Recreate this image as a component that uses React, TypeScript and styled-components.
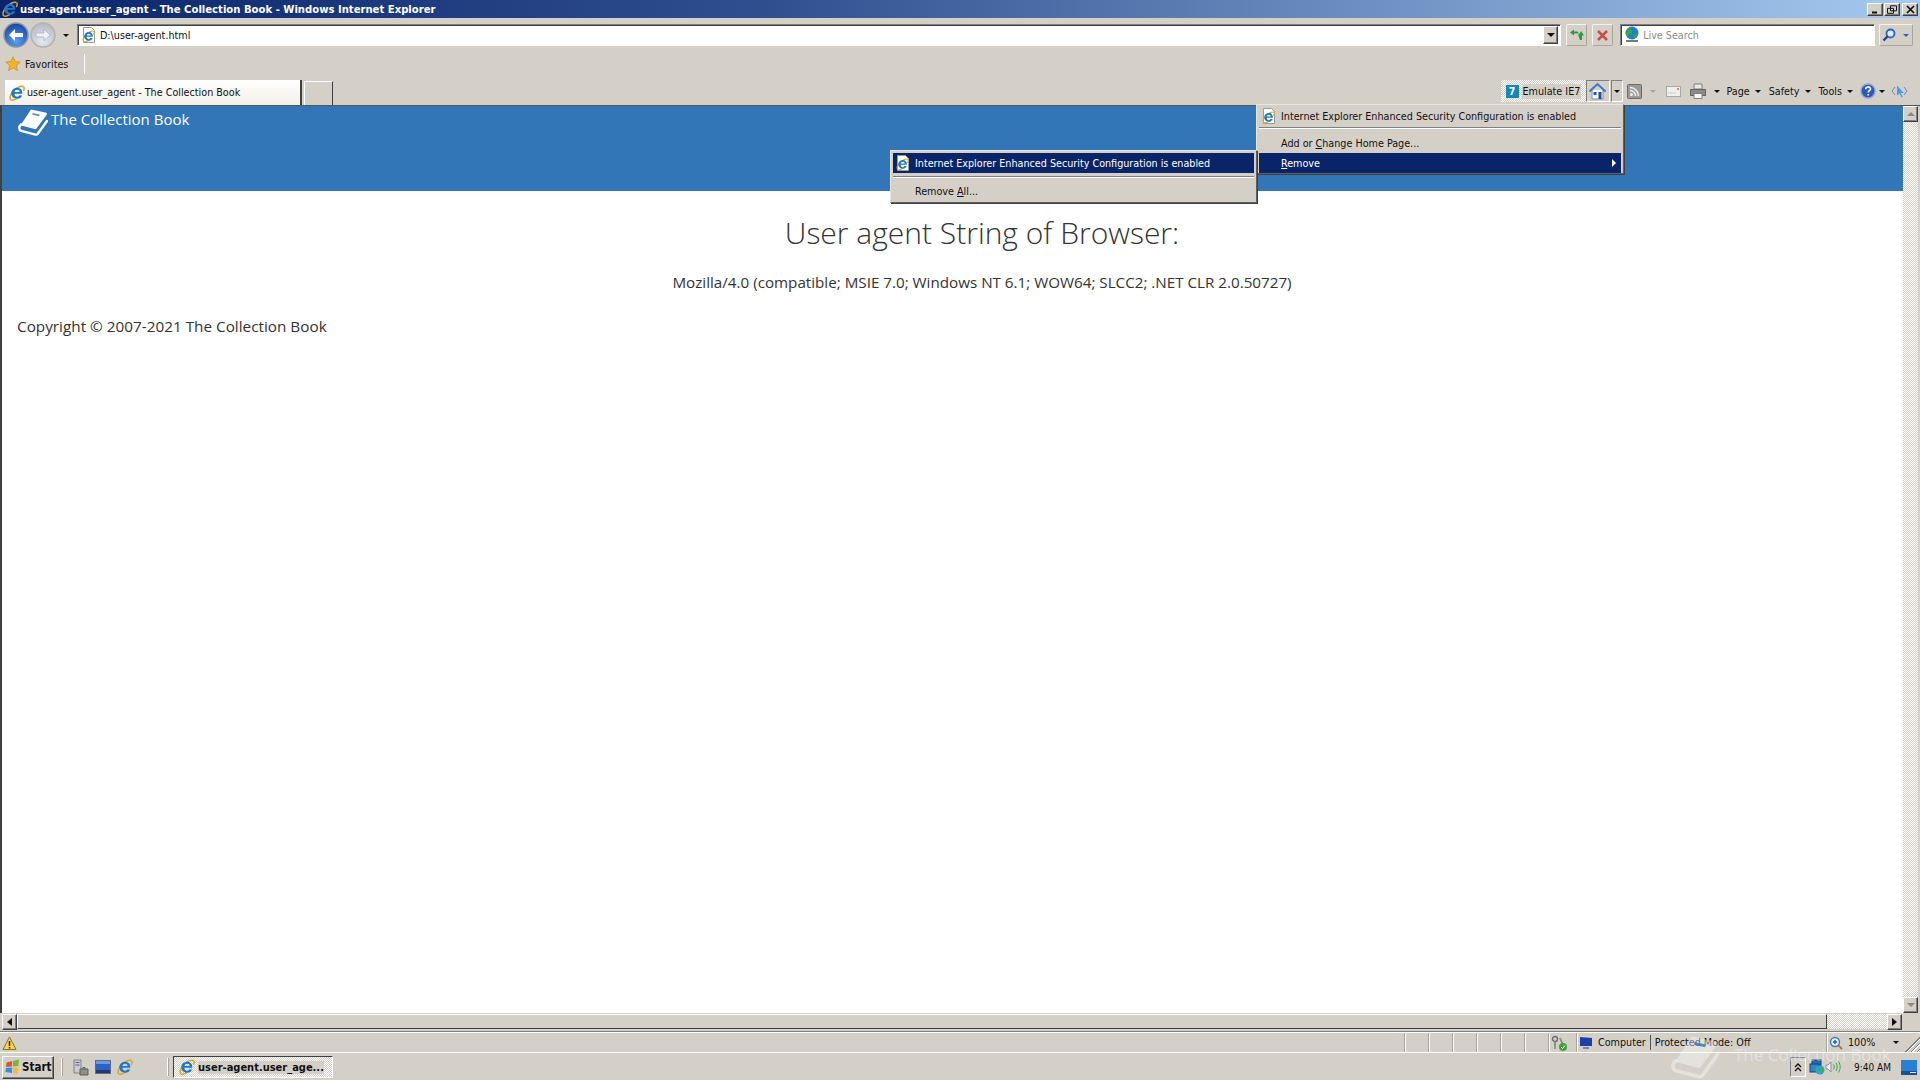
import React from 'react'
import styled, { createGlobalStyle, css } from 'styled-components'

const GlobalStyle = createGlobalStyle`
	html, body {
		margin: 0;
		height: 100%;
		overflow: hidden;
		background: #d4d0c8;
	}
	* {
		box-sizing: border-box;
	}
`

const chrome = '#d4d0c8'
const raised = css`
	border: 1px solid;
	border-color: #fff #404040 #404040 #fff;
	box-shadow: inset -1px -1px 0 #808080;
`
const softButton = css`
	border: 1px solid;
	border-color: #f4f3ef #a8a59c #a8a59c #f4f3ef;
	border-radius: 2px;
`

const Desktop = styled.div`
	position: relative;
	width: 1920px;
	height: 1080px;
	overflow: hidden;
	display: flex;
	flex-direction: column;
	background: ${chrome};
	color: #111;
	font-family: 'DejaVu Sans Condensed', 'DejaVu Sans', sans-serif;
	font-stretch: condensed;
	font-size: 10.7px;
	white-space: nowrap;
`
const TitleBar = styled.div`
	height: 18px;
	flex: none;
	display: flex;
	align-items: center;
	padding: 0 2px 0 2px;
	gap: 2px;
	background: linear-gradient(90deg, #0a246a 0%, #2f4f8f 40%, #a6caf0 100%);
`
const TitleText = styled.span`
	flex: 1;
	color: #fff;
	font-weight: 700;
	font-size: 11.2px;
`
const WinButtons = styled.div`
	display: flex;
	align-items: center;
	gap: 1px;
`
const WinButton = styled.div<{ $gap?: number }>`
	width: 16px;
	height: 13px;
	display: flex;
	align-items: center;
	justify-content: center;
	background: ${chrome};
	margin-left: ${p => p.$gap ?? 0}px;
	${raised}
`
const NavRow = styled.div`
	height: 34px;
	flex: none;
	display: flex;
	align-items: center;
	padding: 0 7px 0 3px;
`
const NavCircles = styled.div`
	display: flex;
	align-items: center;
	width: 74px;
	gap: 1px;
`
const Caret = styled.span<{ $color?: string; $left?: number; $size?: number }>`
	display: inline-block;
	flex: none;
	margin-left: ${p => p.$left ?? 0}px;
	border-style: solid;
	border-width: ${p => p.$size ?? 3}px ${p => p.$size ?? 3}px 0;
	border-color: ${p => p.$color ?? '#111'} transparent transparent;
`
const AddressBox = styled.div`
	width: 1485px;
	height: 22px;
	display: flex;
	align-items: center;
	gap: 3px;
	padding: 0 2px 0 3px;
	background: #fff;
	border: 1px solid;
	border-color: #808080 #fff #fff #808080;
	box-shadow: inset 1px 1px 0 #404040;
`
const AddressText = styled.span`
	flex: 1;
`
const ComboButton = styled.div`
	width: 15px;
	height: 18px;
	display: flex;
	align-items: center;
	justify-content: center;
	background: ${chrome};
	${raised}
`
const SoftButton = styled.div<{ $w: number; $left: number }>`
	width: ${p => p.$w}px;
	height: 22px;
	flex: none;
	margin-left: ${p => p.$left}px;
	display: flex;
	align-items: center;
	justify-content: center;
	gap: 4px;
	${softButton}
`
const SearchBox = styled(AddressBox)`
	width: 255px;
	margin-left: 7px;
	gap: 3px;
	color: #8b8b8b;
`
const FavRow = styled.div`
	height: 26px;
	flex: none;
	display: flex;
	align-items: center;
	padding: 0 0 2px 5px;
	gap: 4px;
`
const FavSeparator = styled.div`
	width: 1px;
	height: 20px;
	margin-left: 12px;
	background: #8f8c84;
	border-right: 1px solid #fff;
`
const TabRow = styled.div`
	height: 27px;
	flex: none;
	display: flex;
	justify-content: space-between;
	align-items: flex-end;
	padding-left: 5px;
`
const TabStrip = styled.div`
	display: flex;
	align-items: flex-end;
`
const ActiveTab = styled.div`
	width: 297px;
	height: 25px;
	display: flex;
	align-items: center;
	gap: 2px;
	padding-left: 4px;
	background: linear-gradient(#ffffff, #f1efe9);
	border-right: 2px solid #404040;
`
const NewTab = styled.div`
	width: 29px;
	height: 24px;
	margin-left: 2px;
	border: 1px solid #fff;
	border-bottom: none;
	border-right: 1px solid #404040;
`
const ToolStrip = styled.div`
	display: flex;
	align-items: center;
	height: 25px;
	padding: 0 12px 3px 0;
`
const EmulateBox = styled.div`
	width: 85px;
	height: 22px;
	display: flex;
	align-items: center;
	gap: 3px;
	padding-left: 5px;
	background: repeating-conic-gradient(#fff 0 25%, ${chrome} 0 50%) 0 0 / 2px 2px;
`
const EmulateText = styled.span`
	background: ${chrome};
	padding: 1px;
`
const SevenBadge = styled.span`
	width: 13px;
	height: 13px;
	display: flex;
	align-items: center;
	justify-content: center;
	background: #1389b4;
	color: #fff;
	font-weight: 700;
	font-size: 10.5px;
`
const PressedTool = styled.div<{ $w: number; $left?: number }>`
	width: ${p => p.$w}px;
	height: 22px;
	margin-left: ${p => p.$left ?? 0}px;
	display: flex;
	align-items: center;
	justify-content: center;
	border: 1px solid;
	border-color: #808080 #fff #fff #808080;
`
const Tool = styled.div<{ $left: number }>`
	display: flex;
	align-items: center;
	gap: 5px;
	margin-left: ${p => p.$left}px;
`
const ContentArea = styled.div`
	flex: 1;
	min-height: 0;
	display: flex;
	border-left: 2px solid #404040;
	border-top: 1px solid #555;
	background: #fff;
`
const Viewport = styled.div`
	flex: 1;
	min-width: 0;
	overflow: hidden;
	background: #fff;
`
const Page = styled.div`
	width: 1960px;
	color: #333;
	font-family: 'Open Sans', 'Noto Sans', sans-serif;
	font-stretch: normal;
`
const Banner = styled.header`
	height: 85px;
	background: #3276b8;
	padding: 2px 0 0 16px;
	display: flex;
	align-items: flex-start;
	gap: 3px;
	color: #fff;
	font-size: 15px;
`
const BannerText = styled.span`
	line-height: 22px;
`
const Heading = styled.h1`
	margin: 20px 0 0;
	height: 44px;
	text-align: center;
	font-weight: 300;
	font-size: 30px;
	line-height: 44px;
`
const AgentText = styled.p`
	margin: 16px 0 0;
	text-align: center;
	font-size: 15.2px;
	line-height: 22px;
`
const Copyright = styled.p`
	margin: 22px 0 0 15px;
	font-size: 15.3px;
	line-height: 22px;
`
const VScroll = styled.div`
	width: 17px;
	flex: none;
	display: flex;
	flex-direction: column;
	justify-content: space-between;
	background: repeating-conic-gradient(#fff 0 25%, ${chrome} 0 50%) 0 0 / 2px 2px;
	border-right: 2px solid ${chrome};
`
const ScrollButton = styled.div`
	width: 15px;
	height: 16px;
	flex: none;
	display: flex;
	align-items: center;
	justify-content: center;
	background: ${chrome};
	${raised}
`
const HScroll = styled.div`
	height: 19px;
	flex: none;
	display: flex;
	padding: 1px 0 2px 2px;
	border-bottom: 1px solid #808080;
`
const HThumb = styled.div`
	flex: 1;
	background: ${chrome};
	border-top: 1px solid #fff;
	border-left: 1px solid #fff;
	border-right: 1px solid #404040;
	border-bottom: 1px solid #404040;
`
const HTrack = styled.div`
	width: 60px;
	background: repeating-conic-gradient(#fff 0 25%, ${chrome} 0 50%) 0 0 / 2px 2px;
`
const HEnd = styled.div`
	width: 18px;
`
const StatusBar = styled.div`
	height: 21px;
	flex: none;
	display: flex;
	align-items: stretch;
	border-top: 1px solid #fff;
	border-bottom: 1px solid #fff;
`
const StatusFill = styled.div`
	flex: 1;
	display: flex;
	align-items: center;
	padding-left: 2px;
`
const StatusCell = styled.div<{ $w: number }>`
	width: ${p => p.$w}px;
	flex: none;
	display: flex;
	align-items: center;
	gap: 5px;
	padding-left: 2px;
	border-left: 1px solid #a8a59c;
	box-shadow: inset 1px 0 0 #fff;
`
const ZoneDivider = styled.span`
	width: 1px;
	height: 15px;
	background: #555;
	margin: 0 -1px;
`
const Grip = styled.div`
	flex: 1;
	height: 100%;
	background: repeating-linear-gradient(135deg, ${chrome} 0 2px, #808080 2px 3px, #fff 3px 4px);
	clip-path: polygon(100% 0, 100% 100%, 0 100%);
`
const Taskbar = styled.div`
	height: 27px;
	flex: none;
	display: flex;
	align-items: center;
	padding: 1px 3px 0 2px;
`
const StartButton = styled.div`
	width: 52px;
	height: 23px;
	display: flex;
	align-items: center;
	gap: 1px;
	padding-left: 2px;
	font-weight: 700;
	font-size: 11.5px;
	${raised}
`
const Divider = styled.div<{ $left: number }>`
	width: 2px;
	height: 18px;
	flex: none;
	margin-left: ${p => p.$left}px;
	background: #a8a59c;
	border-left: 1px solid #fff;
`
const QuickIcons = styled.div`
	display: flex;
	align-items: center;
	gap: 6px;
	margin-left: 9px;
	width: 95px;
`
const TaskItem = styled.div`
	width: 160px;
	height: 22px;
	margin-left: 4px;
	display: flex;
	align-items: center;
	gap: 3px;
	padding-left: 5px;
	font-weight: 700;
	font-size: 11px;
	border: 1px solid;
	border-color: #404040 #fff #fff #404040;
	background: repeating-conic-gradient(#fff 0 25%, ${chrome} 0 50%) 0 0 / 2px 2px;
`
const TaskLabel = styled.span`
	background: ${chrome};
`
const Tray = styled.div`
	margin-left: auto;
	display: flex;
	align-items: center;
`
const TrayToggle = styled.div`
	width: 16px;
	height: 20px;
	display: flex;
	align-items: center;
	justify-content: center;
	border: 1px solid;
	border-color: #808080 #fff #fff #808080;
	margin-right: 3px;
`
const Clock = styled.span`
	font-size: 10px;
	margin: 0 10px 0 13px;
`
const Menu = styled.div<{ $x: number; $y: number; $w: number; $h: number }>`
	position: absolute;
	left: ${p => p.$x}px;
	top: ${p => p.$y}px;
	width: ${p => p.$w}px;
	height: ${p => p.$h}px;
	padding: 2px;
	background: ${chrome};
	border: 1px solid;
	border-color: #e8e6e0 #606060 #606060 #e8e6e0;
	box-shadow: 1px 1px 0 #404040;
	z-index: 3;
`
const MenuRow = styled.div<{ $active?: boolean; $h?: number }>`
	height: ${p => p.$h ?? 20}px;
	display: flex;
	align-items: center;
	padding: 0 5px 0 2px;
	gap: 4px;
	background: ${p => (p.$active ? '#0a246a' : 'transparent')};
	color: ${p => (p.$active ? '#fff' : '#111')};
`
const MenuLabel = styled.span<{ $indent?: boolean }>`
	flex: 1;
	padding-left: ${p => (p.$indent ? 20 : 0)}px;
`
const MenuRule = styled.div<{ $top: number; $bottom: number }>`
	height: 2px;
	margin: ${p => p.$top}px 0 ${p => p.$bottom}px;
	background: #808080;
	border-bottom: 1px solid #fff;
`
const SubArrow = styled.span`
	width: 0;
	height: 0;
	border-style: solid;
	border-width: 4px 0 4px 4px;
	border-color: transparent transparent transparent #fff;
`
const Watermark = styled.div`
	position: absolute;
	left: 1671px;
	top: 1033px;
	display: flex;
	align-items: flex-start;
	gap: 15px;
	color: rgba(255, 255, 255, 0.38);
	font-family: 'Open Sans', sans-serif;
	font-stretch: normal;
	font-size: 17px;
	pointer-events: none;
	z-index: 4;
`
const WatermarkText = styled.span`
	line-height: 44px;
`

// the round "e" logo, used all over the chrome
const IeMark = () => (
	<>
		<path d="M14.500 1.500C12 .8 8 2.500 4.800 5.800 1.500 9.200.200 13 1.500 14.500c1.100 1.200 3.800.6 6.500-1.200" fill="none" stroke="#e0a32a" strokeWidth="1.500" />
		<path d="M14.500 1.500c1 1 .7 2.800-.2 4.500" fill="none" stroke="#e0a32a" strokeWidth="1.500" />
		<path d="M2.700 8.700h10.600c.3-3.700-2-6-5.200-6S2.300 5 2.300 8.300s2.600 5.400 5.800 5.400c2.500 0 4.300-1.200 5-3.300h-3c-.5.900-1.200 1.300-2 1.300-1.500 0-2.600-1.200-2.700-3zM5.400 6.900c.2-1.300 1.300-2.200 2.700-2.200S10.500 5.600 10.700 6.900z" fill="#1e78c8" />
	</>
)
const IeIcon = () => (
	<svg width="16" height="16" viewBox="0 0 16 16">
		<IeMark />
	</svg>
)
const PageIcon = () => (
	<svg width="16" height="16" viewBox="0 0 16 16">
		<path d="M2.500.500h8l3 3v12h-11z" fill="#fff" stroke="#9a9a9a" />
		<g transform="translate(1.500 3) scale(.78)">
			<IeMark />
		</g>
	</svg>
)
const BookIcon = ({ w, h }: { w: number; h: number }) => (
	<svg width={w} height={h} viewBox="0 0 30 28">
		<path d="M13 1.500 27.500 4.500c1.500.4 1.800 1.500 1 2.600L18.500 20.500c-.5.6-1 .8-1.800.6L4 17.800c-1-.3-1-1.200-.4-2z" fill="currentColor" />
		<path d="M3 16.500c-2.400 2.200-2.300 5.500.2 6.400l14.300 3.700c1 .2 1.600 0 2.200-.8L29 13" fill="none" stroke="currentColor" strokeWidth="2.400" strokeLinecap="round" />
		<path d="M14.500 5.800l7 1.600" stroke="#3276b8" strokeOpacity=".8" strokeWidth="1.800" />
	</svg>
)
const NavArrow = ({ back }: { back?: boolean }) => (
	<svg width="26" height="26" viewBox="0 0 26 26">
		<defs>
			<radialGradient id={back ? 'navBack' : 'navFwd'} cx=".5" cy=".75" r=".8">
				<stop offset="0" stopColor={back ? '#5aa0f0' : '#e6eaf0'} />
				<stop offset="1" stopColor={back ? '#123f98' : '#aeb6c2'} />
			</radialGradient>
		</defs>
		<circle cx="13" cy="13" r="12" fill={`url(#${back ? 'navBack' : 'navFwd'})`} stroke={back ? '#8a94a8' : '#b4b2ac'} strokeWidth="1.500" />
		{back ? (
			<path d="M6 13l6-6v4h8v4h-8v4z" fill="#fff" />
		) : (
			<path d="M20 13l-6-6v4H6v4h8v4z" fill="#eef1f5" stroke="#9aa4b2" strokeWidth=".6" />
		)}
	</svg>
)
const RefreshIcon = () => (
	<svg width="16" height="14" viewBox="0 0 16 14">
		<path d="M1 4.500l4-3v2h3.500l1.500 2H5v2z" fill="#2f9a3a" />
		<path d="M12 3l3 4.500h-2V12h-2l-2-5.500h1z" fill="#2f9a3a" />
	</svg>
)
const StopIcon = () => (
	<svg width="13" height="13" viewBox="0 0 13 13">
		<path d="M2 2l9 9M11 2l-9 9" stroke="#c9504a" strokeWidth="2.600" />
	</svg>
)
const GlobeIcon = () => (
	<svg width="16" height="18" viewBox="0 0 16 18">
		<circle cx="8" cy="7" r="6.500" fill="#1f7fd0" />
		<path d="M4 2.500c3 0 5 2 4 4s-3 1-4 3-2-1-2.500-3zM10 8c2-1 3-.5 3.500.5-.5 2-2 3.500-3.500 4-.5-1.500-1-3 0-4.500z" fill="#3aa83a" />
		<path d="M2 15h12" stroke="#777" strokeWidth="2" />
	</svg>
)
const MagnifierIcon = () => (
	<svg width="14" height="14" viewBox="0 0 14 14">
		<circle cx="8.500" cy="5.500" r="4" fill="#dcebfb" stroke="#2a5fc0" strokeWidth="1.800" />
		<path d="M5.500 8.500L1.500 12.500" stroke="#1f3f9a" strokeWidth="2.400" />
	</svg>
)
const HomeIcon = () => (
	<svg width="17" height="20" viewBox="0 0 17 20">
		<path d="M3 9v9h11V9" fill="#f3f6fa" stroke="#8090a8" />
		<path d="M.5 10.500 8.500 3l8 7.500" fill="none" stroke="#3c78c8" strokeWidth="2" />
		<path d="M4.500 11h3v3h-3z" fill="#2a5a9a" />
		<path d="M9.500 11h3v7h-3z" fill="#2a4f88" />
	</svg>
)
const RssIcon = () => (
	<svg width="15" height="15" viewBox="0 0 15 15">
		<rect x=".5" y=".5" width="14" height="14" rx="1" fill="#9c9a94" stroke="#6d6b66" />
		<circle cx="4.500" cy="10.500" r="1.500" fill="#f4f4f2" />
		<path d="M3 6.500a5.500 5.500 0 0 1 5.500 5.500M3 3.500A8.500 8.500 0 0 1 11.500 12" fill="none" stroke="#f4f4f2" strokeWidth="1.400" />
	</svg>
)
const MailIcon = () => (
	<svg width="15" height="11" viewBox="0 0 15 11">
		<rect x=".5" y=".5" width="14" height="10" fill="#f0efec" stroke="#a9a7a1" />
		<path d="M11 2h2v2h-2z" fill="#c98a80" />
		<path d="M2 7h8" stroke="#cfcdc8" />
	</svg>
)
const PrintIcon = () => (
	<svg width="16" height="17" viewBox="0 0 16 17">
		<path d="M4 1h8v5H4z" fill="#eceae6" stroke="#7f7e7a" />
		<path d="M.500 6.500h15v6H.500z" fill="#8b8a86" stroke="#62615e" />
		<path d="M4 10.500h8v5H4z" fill="#f6f5f2" stroke="#7f7e7a" />
	</svg>
)
const HelpIcon = () => (
	<svg width="16" height="16" viewBox="0 0 16 16">
		<circle cx="8" cy="8" r="7" fill="#2d58b8" stroke="#8fa3cf" strokeWidth="1.400" />
		<path d="M5.700 6.200c0-3 4.800-3 4.800-.2 0 1.700-2.300 1.800-2.300 3.600M8.200 11v1.600" fill="none" stroke="#fff" strokeWidth="1.600" />
	</svg>
)
const ResearchIcon = () => (
	<svg width="17" height="14" viewBox="0 0 17 14">
		<path d="M4 3 1 7l3 4M13 3l3 4-3 4" fill="none" stroke="#6d88b8" />
		<path d="M6 1.500v10l2.500-2 2 4 1.300-.6-2-3.900h3z" fill="#4f9be0" />
	</svg>
)
const WarnIcon = () => (
	<svg width="15" height="17" viewBox="0 0 15 17">
		<path d="M7.500 3 14 15.500H1z" fill="#f8d648" stroke="#8a7420" />
		<path d="M7.500 7v5M7.500 13v1.500" stroke="#222" strokeWidth="1.500" />
	</svg>
)
const LockOkIcon = () => (
	<svg width="16" height="16" viewBox="0 0 16 16">
		<circle cx="4" cy="4" r="2.500" fill="none" stroke="#6d6d6d" strokeWidth="1.400" />
		<path d="M4 6.500V14M9 3l3 7" stroke="#8a8a8a" strokeWidth="1.800" />
		<circle cx="12" cy="12" r="4" fill="#3ba53b" />
		<path d="M10 12l1.500 1.500L14 10.500" fill="none" stroke="#fff" />
	</svg>
)
const ComputerIcon = () => (
	<svg width="14" height="16" viewBox="0 0 14 16">
		<path d="M1 2l12 1v8L1 11z" fill="#1f3fa8" />
		<path d="M4 12h6v2H4z" fill="#6f87b8" />
	</svg>
)
const ZoomIcon = () => (
	<svg width="14" height="14" viewBox="0 0 14 14">
		<circle cx="6" cy="6" r="4.500" fill="#e4f0fb" stroke="#3a78c8" strokeWidth="1.400" />
		<path d="M4 6h4M6 4v4" stroke="#1f5fb8" strokeWidth="1.400" />
		<path d="M9.500 9.500l3.500 3.500" stroke="#b07838" strokeWidth="2" />
	</svg>
)
const FlagIcon = () => (
	<svg width="16" height="16" viewBox="0 0 16 16">
		<path d="M1.500 3.500 7 2v5.500L1 8z" fill="#e2552b" />
		<path d="M8 2l6-1.500-.6 6.500L8 7.500z" fill="#7bb62e" />
		<path d="M1 9l6-.5V14l-6.500-1z" fill="#2f8fe0" />
		<path d="M8 8.500l5.300.5L12.500 15 8 14z" fill="#f5bd27" />
	</svg>
)
const ServerIcon = () => (
	<svg width="17" height="17" viewBox="0 0 17 17">
		<path d="M2 1h7v13H2z" fill="#c9ccd2" stroke="#7d838e" />
		<path d="M3.500 3.500h4M3.500 6h4" stroke="#5d6470" />
		<path d="M8 10h8v6H8z" fill="#8f8f88" stroke="#5f5f58" />
		<path d="M11 10V8.500h2V10" fill="none" stroke="#5f5f58" />
	</svg>
)
const DesktopIcon = () => (
	<svg width="16" height="14" viewBox="0 0 16 14">
		<rect x=".5" y=".5" width="15" height="13" fill="#2a62c8" stroke="#5c6c88" />
		<path d="M1 10h14v3H1z" fill="#243a68" />
		<path d="M1 1h14v3H1z" fill="#6a9ae0" />
	</svg>
)
const NetworkIcon = () => (
	<svg width="16" height="16" viewBox="0 0 16 16">
		<rect x="3" y="1" width="9" height="8" fill="#1f6fb8" stroke="#1c3f70" />
		<rect x="1" y="5" width="9" height="8" fill="#2a86d0" stroke="#1c3f70" />
		<circle cx="11" cy="11" r="4.500" fill="#2fa3d8" />
		<path d="M9 9c2 0 3 1 2 2s-2 .5-2 2M13 9.500c1 1 1 3-.5 4" fill="none" stroke="#3cb03c" strokeWidth="1.400" />
	</svg>
)
const SpeakerIcon = () => (
	<svg width="16" height="16" viewBox="0 0 16 16">
		<path d="M1 6h2l3-3v10l-3-3H1z" fill="#eceef2" stroke="#8a919c" />
		<path d="M8.500 5.500c1 1.500 1 3.500 0 5M11 4c1.600 2.500 1.600 5.500 0 8M13.500 2.500c2.200 3.500 2.200 7.500 0 11" fill="none" stroke="#3ca83c" />
	</svg>
)
const ShowDesktopIcon = () => (
	<svg width="16" height="15" viewBox="0 0 16 15">
		<rect width="16" height="15" fill="#2a7fd0" />
		<path d="M0 11h16v4H0z" fill="#1c4f92" />
		<path d="M9 12.500h6" stroke="#dfe8f4" />
	</svg>
)
const TriangleUp = () => (
	<svg width="8" height="4" viewBox="0 0 8 4">
		<path d="M0 4h8L4 0z" fill="#8a8a86" />
	</svg>
)
const TriangleLeft = () => (
	<svg width="5" height="8" viewBox="0 0 5 8">
		<path d="M5 0v8L0 4z" fill="#111" />
	</svg>
)
const TriangleRight = () => (
	<svg width="5" height="8" viewBox="0 0 5 8">
		<path d="M0 0v8l5-4z" fill="#111" />
	</svg>
)
const Chevrons = () => (
	<svg width="8" height="9" viewBox="0 0 8 9">
		<path d="M1 4l3-3 3 3M1 8l3-3 3 3" fill="none" stroke="#111" strokeWidth="1.300" />
	</svg>
)

const pageTitle = 'user-agent.user_agent - The Collection Book'
const securityNote = 'Internet Explorer Enhanced Security Configuration is enabled'

const App = () => {
	return (
		<Desktop>
			<GlobalStyle />
			<TitleBar>
				<IeIcon />
				<TitleText>{pageTitle} - Windows Internet Explorer</TitleText>
				<WinButtons>
					<WinButton>
						<svg width="8" height="9" viewBox="0 0 8 9">
							<path d="M1 7.500h5" stroke="#111" strokeWidth="2" />
						</svg>
					</WinButton>
					<WinButton>
						<svg width="10" height="9" viewBox="0 0 10 9">
							<path d="M3.500.800h6v5h-6zM.500 3.300h6v5h-6z" fill={chrome} stroke="#111" />
						</svg>
					</WinButton>
					<WinButton $gap={1}>
						<svg width="9" height="9" viewBox="0 0 9 9">
							<path d="M1 1l7 7M8 1L1 8" stroke="#111" strokeWidth="1.700" />
						</svg>
					</WinButton>
				</WinButtons>
			</TitleBar>

			<NavRow>
				<NavCircles>
					<NavArrow back />
					<NavArrow />
					<Caret $left={6} />
				</NavCircles>
				<AddressBox>
					<PageIcon />
					<AddressText>D:\user-agent.html</AddressText>
					<ComboButton>
						<Caret $size={4} />
					</ComboButton>
				</AddressBox>
				<SoftButton $w={21} $left={5}>
					<RefreshIcon />
				</SoftButton>
				<SoftButton $w={21} $left={5}>
					<StopIcon />
				</SoftButton>
				<SearchBox>
					<GlobeIcon />
					<span>Live Search</span>
				</SearchBox>
				<SoftButton $w={34} $left={4}>
					<MagnifierIcon />
					<Caret $color="#2a5fc0" $left={3} />
				</SoftButton>
			</NavRow>

			<FavRow>
				<svg width="16" height="16" viewBox="0 0 16 16">
					<path d="M8 .8l2.200 4.700 5 .6-3.700 3.400 1 5L8 12l-4.500 2.500 1-5L.8 6.100l5-.6z" fill="#f2b32c" stroke="#c98a24" strokeWidth=".7" />
				</svg>
				<span>Favorites</span>
				<FavSeparator />
			</FavRow>

			<TabRow>
				<TabStrip>
					<ActiveTab>
						<IeIcon />
						<span>{pageTitle}</span>
					</ActiveTab>
					<NewTab />
				</TabStrip>
				<ToolStrip>
					<EmulateBox>
						<SevenBadge>7</SevenBadge>
						<EmulateText>Emulate IE7</EmulateText>
					</EmulateBox>
					<PressedTool $w={24}>
						<HomeIcon />
					</PressedTool>
					<PressedTool $w={12} $left={1}>
						<Caret />
					</PressedTool>
					<Tool $left={4}>
						<RssIcon />
					</Tool>
					<Tool $left={8}>
						<Caret $color="#a8a59c" />
					</Tool>
					<Tool $left={10}>
						<MailIcon />
					</Tool>
					<Tool $left={9}>
						<PrintIcon />
						<Caret $left={3} />
					</Tool>
					<Tool $left={7}>
						Page
						<Caret />
					</Tool>
					<Tool $left={8}>
						Safety
						<Caret />
					</Tool>
					<Tool $left={8}>
						Tools
						<Caret />
					</Tool>
					<Tool $left={7}>
						<HelpIcon />
						<Caret $left={-2} />
					</Tool>
					<Tool $left={6}>
						<ResearchIcon />
					</Tool>
				</ToolStrip>
			</TabRow>

			<ContentArea>
				<Viewport>
					<Page>
						<Banner>
							<BookIcon w={30} h={28} />
							<BannerText>The Collection Book</BannerText>
						</Banner>
						<Heading>User agent String of Browser:</Heading>
						<AgentText>Mozilla/4.0 (compatible; MSIE 7.0; Windows NT 6.1; WOW64; SLCC2; .NET CLR 2.0.50727)</AgentText>
						<Copyright>Copyright © 2007-2021 The Collection Book</Copyright>
					</Page>
				</Viewport>
				<VScroll>
					<ScrollButton>
						<TriangleUp />
					</ScrollButton>
					<ScrollButton>
						<Caret $color="#8a8a86" $size={4} />
					</ScrollButton>
				</VScroll>
			</ContentArea>

			<HScroll>
				<ScrollButton>
					<TriangleLeft />
				</ScrollButton>
				<HThumb />
				<HTrack />
				<ScrollButton>
					<TriangleRight />
				</ScrollButton>
				<HEnd />
			</HScroll>

			<StatusBar>
				<StatusFill>
					<WarnIcon />
				</StatusFill>
				{[24, 24, 24, 24, 24, 24].map((w, i) => (
					<StatusCell key={i} $w={w} />
				))}
				<StatusCell $w={28}>
					<LockOkIcon />
				</StatusCell>
				<StatusCell $w={250}>
					<ComputerIcon />
					<span>Computer</span>
					<ZoneDivider />
					<span>Protected Mode: Off</span>
				</StatusCell>
				<StatusCell $w={94}>
					<ZoomIcon />
					<span>100%</span>
					<Caret $left={12} />
					<Grip />
				</StatusCell>
			</StatusBar>

			<Taskbar>
				<StartButton>
					<FlagIcon />
					Start
				</StartButton>
				<Divider $left={7} />
				<QuickIcons>
					<ServerIcon />
					<DesktopIcon />
					<IeIcon />
				</QuickIcons>
				<Divider $left={0} />
				<TaskItem>
					<IeIcon />
					<TaskLabel>user-agent.user_age...</TaskLabel>
				</TaskItem>
				<Tray>
					<TrayToggle>
						<Chevrons />
					</TrayToggle>
					<NetworkIcon />
					<SpeakerIcon />
					<Clock>9:40 AM</Clock>
					<ShowDesktopIcon />
				</Tray>
			</Taskbar>

			<Menu $x={1256} $y={104} $w={368} $h={70}>
				<MenuRow $h={18}>
					<PageIcon />
					<MenuLabel>{securityNote}</MenuLabel>
				</MenuRow>
				<MenuRule $top={2} $bottom={5} />
				<MenuRow $h={19}>
					<MenuLabel $indent>
						Add or <u>C</u>hange Home Page...
					</MenuLabel>
				</MenuRow>
				<MenuRow $active>
					<MenuLabel $indent>
						<u>R</u>emove
					</MenuLabel>
					<SubArrow />
				</MenuRow>
			</Menu>

			<Menu $x={890} $y={150} $w={367} $h={53}>
				<MenuRow $active>
					<PageIcon />
					<MenuLabel>{securityNote}</MenuLabel>
				</MenuRow>
				<MenuRule $top={3} $bottom={4} />
				<MenuRow $h={19}>
					<MenuLabel $indent>
						Remove <u>A</u>ll...
					</MenuLabel>
				</MenuRow>
			</Menu>

			<Watermark>
				<BookIcon w={48} h={47} />
				<WatermarkText>The Collection Book</WatermarkText>
			</Watermark>
		</Desktop>
	)
}

export default App
